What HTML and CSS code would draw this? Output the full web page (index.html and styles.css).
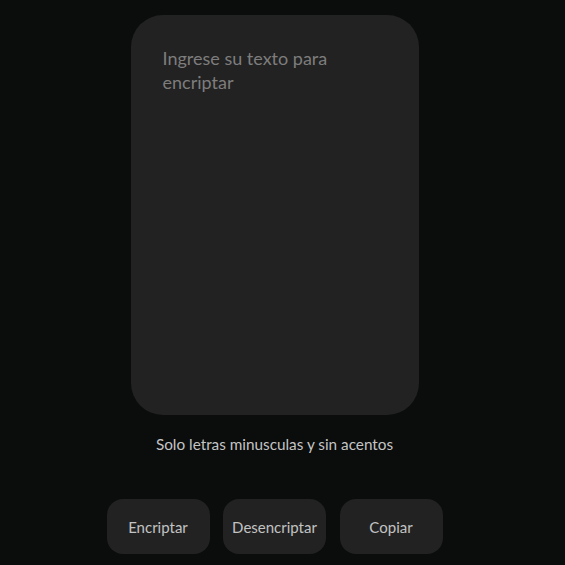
FILE: index.html
```html
<!DOCTYPE html>
<html lang="es">
<head>
<meta charset="utf-8">
<title>Encriptador</title>
<link rel="stylesheet" href="styles.css">
</head>
<body>
<main class="app">
  <textarea class="input" placeholder="Ingrese su texto para encriptar"></textarea>
  <p class="hint">Solo letras minusculas y sin acentos</p>
  <div class="actions">
    <button class="btn">Encriptar</button>
    <button class="btn">Desencriptar</button>
    <button class="btn">Copiar</button>
  </div>
</main>
</body>
</html>
```
FILE: styles.css
```css
html, body {
  margin: 0;
  padding: 0;
  background: #0b0c0c;
  height: 100%;
  overflow: hidden;
}
.app {
  width: 549px;
  display: flex;
  flex-direction: column;
  align-items: center;
  padding-top: 15px;
  font-family: "Lato", "Noto Sans", sans-serif;
}
.input {
  box-sizing: border-box;
  width: 288px;
  height: 400px;
  margin: 0;
  padding: 31px 32px;
  border: none;
  outline: none;
  resize: none;
  border-radius: 32px;
  background: #222222;
  color: #bbbbbb;
  font-family: inherit;
  font-size: 18px;
  line-height: 24px;
}
.input::placeholder {
  color: #7d7d7d;
}
.hint {
  margin: 20px 0 0;
  color: #c4c4c4;
  font-size: 15.3px;
  line-height: 18px;
}
.actions {
  display: flex;
  gap: 13.5px;
  margin-top: 46px;
}
.btn {
  width: 103px;
  height: 55px;
  border: none;
  border-radius: 16px;
  background: #222222;
  color: #c2c2c2;
  font-family: inherit;
  font-size: 15px;
  padding: 0;
}
```
